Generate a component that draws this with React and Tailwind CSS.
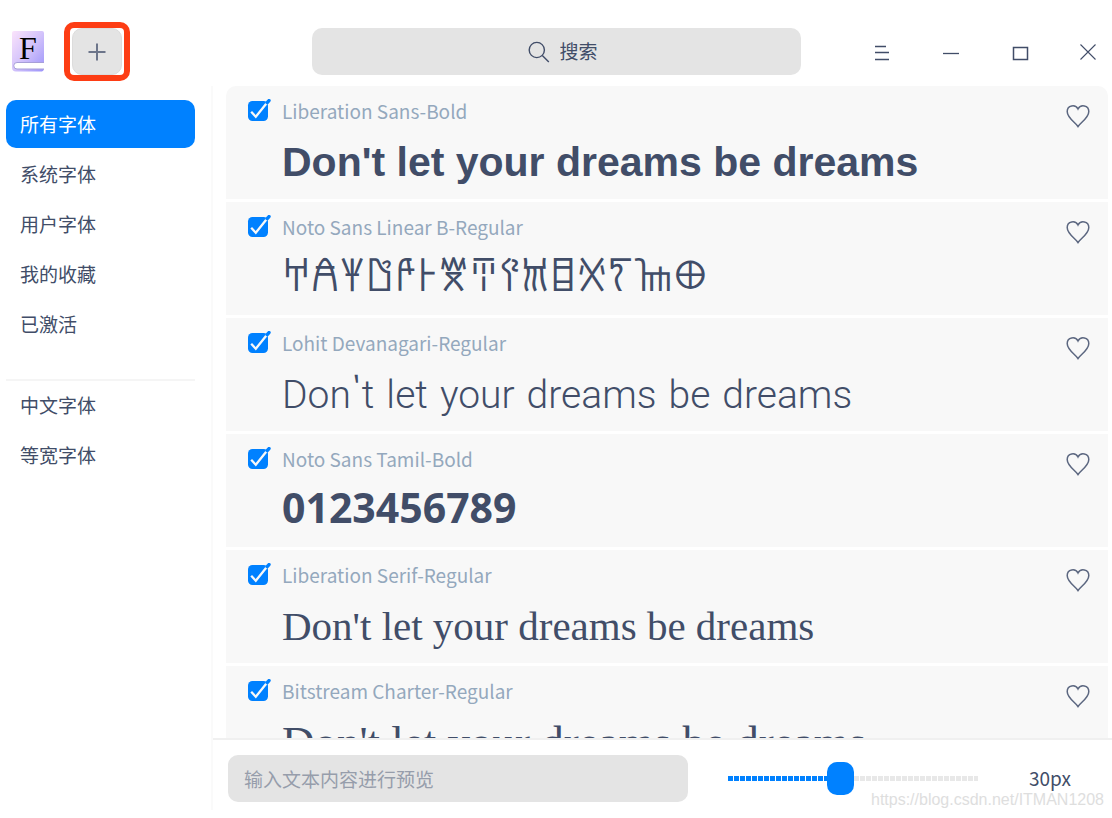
import { useState } from 'react'

const GROUPS = [
  ['所有字体', '系统字体', '用户字体', '我的收藏', '已激活'],
  ['中文字体', '等宽字体'],
]

const PANGRAM = "Don't let your dreams be dreams"

const FONTS = [
  { name: 'Liberation Sans-Bold', sample: PANGRAM, className: "font-['Liberation_Sans',sans-serif] font-bold text-[41px] leading-[52px]" },
  { name: 'Noto Sans Linear B-Regular', sample: '𐀀𐀁𐀂𐀃𐀄𐀅𐀆𐀇𐀈𐀉𐀊𐀋𐀍𐀎𐀏', className: "font-['Noto_Sans_Linear_B','Noto_Sans',sans-serif] text-[41px] leading-[46px]" },
  { name: 'Lohit Devanagari-Regular', sample: PANGRAM, className: "font-['Lohit_Devanagari','Roboto',sans-serif] font-light text-[39px] leading-[58px]" },
  { name: 'Noto Sans Tamil-Bold', sample: '0123456789', className: "font-['Noto_Sans',sans-serif] font-bold text-[41px] leading-[46px]" },
  { name: 'Liberation Serif-Regular', sample: PANGRAM, className: "font-['Liberation_Serif',serif] text-[41px] leading-[52px]" },
  { name: 'Bitstream Charter-Regular', sample: PANGRAM, className: "font-['Bitstream_Charter','Liberation_Serif',serif] text-[45px] leading-[52px]" },
]

const MIN_SIZE = 6
const MAX_SIZE = 60

function Logo() {
  return (
    <svg width="34" height="42" viewBox="0 0 34 42" aria-hidden="true">
      <defs>
        <linearGradient id="cover" x1="0" y1="0" x2="1" y2="1">
          <stop offset="0" stopColor="#fbe3fb" />
          <stop offset="0.5" stopColor="#d3c3fb" />
          <stop offset="1" stopColor="#9b93fa" />
        </linearGradient>
      </defs>
      <path d="M3 0h28a2 2 0 0 1 2 2v29.500H6a3.500 3.500 0 0 0 0 6.500h27a3 3 0 0 1-2 2.500H5a4 4 0 0 1-4-4V2a2 2 0 0 1 2-2z" fill="url(#cover)" />
      <path d="M33 31.500H6a3.200 3.200 0 0 0 0 6.500h27" fill="#fff" stroke="#a79fd8" strokeWidth="1" />
      <text x="17" y="28" textAnchor="middle" fontSize="32" fontFamily="Liberation Serif, serif" fill="#000">F</text>
    </svg>
  )
}

function WindowButton({ label, children }) {
  return (
    <button type="button" aria-label={label} className="flex size-8 items-center justify-center text-[#414d68]">
      <svg width="20" height="20" viewBox="0 0 20 20" fill="none" stroke="currentColor" strokeWidth="1.3" aria-hidden="true">
        {children}
      </svg>
    </button>
  )
}

function TitleBar() {
  return (
    <header className="flex h-[86px] shrink-0 items-center pt-[17px] pr-2 pl-[11px]">
      <div className="flex w-[301px] shrink-0 items-center gap-[19px]">
        <Logo />
        <button
          type="button"
          aria-label="添加字体"
          className="flex h-[59px] w-[66px] items-center justify-center rounded-[10px] border-[6px] border-[#fd3d14] bg-white"
        >
          <span className="flex h-[47px] w-[50px] items-center justify-center rounded-[10px] border border-[#dcdcdc] bg-[#e4e4e4]">
            <svg width="18" height="18" viewBox="0 0 18 18" fill="none" stroke="#6c758a" strokeWidth="2" aria-hidden="true">
              <path d="M9 0.500v17M0.500 9h17" />
            </svg>
          </span>
        </button>
      </div>
      <label className="flex h-[47px] min-w-0 flex-1 items-center justify-center gap-[10px] rounded-[10px] bg-[#e4e4e4] pl-[14px]">
        <svg width="22" height="22" viewBox="0 0 22 22" fill="none" stroke="#414d68" strokeWidth="1.4" aria-hidden="true">
          <circle cx="8.800" cy="9" r="7.600" />
          <path d="M14.300 14.500l6.500 6.500" />
        </svg>
        <input
          type="text"
          placeholder="搜索"
          aria-label="搜索"
          className="w-10 bg-transparent outline-none placeholder:text-[#414d68] placeholder:opacity-100"
        />
      </label>
      <div className="ml-[64px] flex shrink-0 items-center gap-[37px]">
        <WindowButton label="菜单">
          <path d="M4 4.500h11M4 10.500h14M4 17.500h14" />
        </WindowButton>
        <WindowButton label="最小化">
          <path d="M3 11.500h16" />
        </WindowButton>
        <WindowButton label="最大化">
          <rect x="4.500" y="5.500" width="14" height="12" strokeWidth="1.5" />
        </WindowButton>
        <WindowButton label="关闭">
          <path d="M2.500 2.500l15 15M17.500 2.500l-15 15" strokeWidth="1.1" />
        </WindowButton>
      </div>
    </header>
  )
}

function Sidebar({ active, onSelect }) {
  return (
    <nav className="mb-2 flex w-[213px] shrink-0 flex-col border-r-2 border-[#fafafa] pt-[14px] pr-4 pl-[6px]">
      {GROUPS.map((items, i) => (
        <ul key={i} className={i > 0 ? 'mt-[31px] flex flex-col gap-[2px] border-t-2 border-[#f5f5f5]' : 'flex flex-col gap-[2px]'}>
          {items.map((item) => (
            <li key={item}>
              <button
                type="button"
                onClick={() => onSelect(item)}
                className={
                  item === active
                    ? 'h-12 w-full rounded-[10px] bg-[#0081ff] px-[14px] text-left text-white'
                    : 'h-12 w-full rounded-[10px] px-[14px] text-left'
                }
              >
                {item}
              </button>
            </li>
          ))}
        </ul>
      ))}
    </nav>
  )
}

function FontRow({ font }) {
  const [enabled, setEnabled] = useState(true)
  const [liked, setLiked] = useState(false)

  return (
    <li className="flex h-[113px] shrink-0 items-start bg-[#f8f8f8] pr-[18px] pl-[21px]">
      <div className="min-w-0 flex-1">
        <label className="flex h-[50px] items-center gap-[11px] text-[#94a8bd]">
          <span className="relative size-6">
            <input
              type="checkbox"
              checked={enabled}
              onChange={() => setEnabled(!enabled)}
              className="absolute inset-0 size-6 appearance-none"
            />
            <svg width="24" height="24" viewBox="0 0 24 24" fill="none" className="pointer-events-none absolute inset-0" aria-hidden="true">
              <rect x="1" y="2" width="20" height="20" rx="4.500" fill={enabled ? '#0081ff' : '#dcdcdc'} />
              {enabled && (
                <>
                  <path d="M4.200 12.800l4.600 5L20 3.800" stroke="#f8f8f8" strokeWidth="2.300" />
                  <path d="M20.200 3.600l1.800-2" stroke="#0081ff" strokeWidth="3.400" strokeLinecap="round" />
                </>
              )}
            </svg>
          </span>
          {font.name}
        </label>
        <p className={`pl-[35px] whitespace-nowrap ${font.className}`}>{font.sample}</p>
      </div>
      <button type="button" aria-label="收藏" aria-pressed={liked} onClick={() => setLiked(!liked)} className="mt-[18px]">
        <svg width="24" height="24" viewBox="0 0 24 24" fill={liked ? '#414d68' : 'none'} stroke="#5c6780" strokeWidth="1.500" aria-hidden="true">
          <path d="M12 22.500C9.500 18.500 1.200 14 1.200 7.500C1.200 1 9.500 0 12 5C14.500 0 22.800 1 22.800 7.500C22.800 14 14.500 18.500 12 22.500z" />
        </svg>
      </button>
    </li>
  )
}

function PreviewBar() {
  const [text, setText] = useState('')
  const [size, setSize] = useState(30)
  const filled = `${((size - MIN_SIZE) / (MAX_SIZE - MIN_SIZE)) * 100}%`

  return (
    <footer className="flex h-20 shrink-0 items-center border-t-2 border-[#f0f0f0] pr-[41px] pb-[2px] pl-[15px]">
      <input
        type="text"
        value={text}
        onChange={(e) => setText(e.target.value)}
        placeholder="输入文本内容进行预览"
        aria-label="预览文本"
        className="h-[47px] min-w-0 flex-1 rounded-[10px] bg-[#e4e4e4] px-4 outline-none placeholder:text-[#969dab] placeholder:opacity-100"
      />
      <input
        type="range"
        min={MIN_SIZE}
        max={MAX_SIZE}
        value={size}
        onChange={(e) => setSize(Number(e.target.value))}
        aria-label="字号"
        style={{ '--filled': filled }}
        className="ml-10 h-[33px] w-[250px] appearance-none bg-transparent [&::-webkit-slider-runnable-track]:h-[5px] [&::-webkit-slider-runnable-track]:bg-[repeating-linear-gradient(90deg,transparent_0_5px,#fff_5px_6px),linear-gradient(90deg,#0081ff_var(--filled),#e8e8e8_var(--filled))] [&::-webkit-slider-thumb]:-mt-[14px] [&::-webkit-slider-thumb]:h-[33px] [&::-webkit-slider-thumb]:w-[27px] [&::-webkit-slider-thumb]:appearance-none [&::-webkit-slider-thumb]:rounded-[10px] [&::-webkit-slider-thumb]:bg-[#0081ff]"
      />
      <output className="ml-[50px] w-[43px] text-right whitespace-nowrap">{size}px</output>
    </footer>
  )
}

export default function App() {
  const [active, setActive] = useState('所有字体')

  return (
    <div className="relative flex h-screen flex-col overflow-hidden bg-white font-['Noto_Sans_CJK_SC',sans-serif] text-[19px] text-[#414d68]">
      <TitleBar />
      <div className="flex min-h-0 flex-1">
        <Sidebar active={active} onSelect={setActive} />
        <main className="flex min-w-0 flex-1 flex-col">
          <ul className="mr-1 ml-[13px] flex min-h-0 flex-1 flex-col gap-[3px] overflow-hidden rounded-t-[10px]">
            {FONTS.map((font) => (
              <FontRow key={font.name} font={font} />
            ))}
          </ul>
          <PreviewBar />
        </main>
      </div>
      <span className="pointer-events-none absolute right-2 bottom-[6px] font-['Liberation_Sans',sans-serif] text-base text-[#dedede]">
        https://blog.csdn.net/ITMAN1208
      </span>
    </div>
  )
}
